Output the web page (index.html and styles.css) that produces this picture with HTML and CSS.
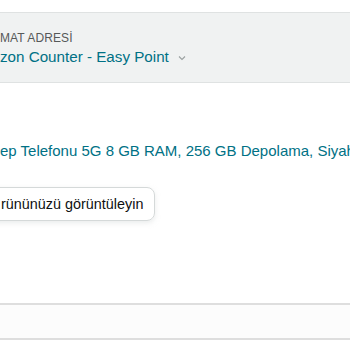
FILE: index.html
```html
<!DOCTYPE html>
<html lang="tr">
<head>
<meta charset="utf-8">
<link rel="stylesheet" href="styles.css">
</head>
<body>
<div class="page">
  <section class="delivery">
    <div class="label">MAT ADRESİ</div>
    <div class="addr"><span class="addr-link">zon Counter - Easy Point</span>
      <svg class="chev" width="8" height="6" viewBox="0 0 8 6"><path d="M1 1.5 L4 4.5 L7 1.5" fill="none" stroke="#9aa0a0" stroke-width="1.1"/></svg>
    </div>
  </section>
  <section class="product">
    <div class="title">ep Telefonu 5G 8 GB RAM, 256 GB Depolama, Siyah</div>
    <div class="btn">rününüzü görüntüleyin</div>
  </section>
  <section class="footer-band"></section>
</div>
</body>
</html>
```
FILE: styles.css
```css
* { box-sizing: border-box; }
html, body { margin: 0; padding: 0; background: #fff; }
body { font-family: "Liberation Sans", Arial, sans-serif; color: #0f1111; width: 350px; height: 350px; overflow: hidden; }
.page { display: flex; flex-direction: column; }
.delivery {
  margin-top: 12px;
  height: 71px;
  background: #f0f2f2;
  border-top: 1px solid #dfe2e2;
  border-bottom: 1px solid #dfe2e2;
  padding: 18px 0 0 0;
}
.label { font-size: 12px; line-height: 14px; color: #565959; letter-spacing: 0.1px; }
.addr { display: flex; align-items: center; gap: 9px; margin-top: 2px; }
.addr-link { font-size: 15.2px; line-height: 20px; color: #007185; }
.chev { margin-top: 1px; }
.product { padding-top: 58px; display: flex; flex-direction: column; align-items: flex-start; }
.title { font-size: 15px; line-height: 20px; color: #007185; white-space: nowrap; }
.btn {
  margin-top: 26px;
  margin-left: -12px;
  padding: 8px 11px 7px 12px;
  border: 1px solid #d5d9d9;
  border-radius: 8px;
  box-shadow: 0 2px 5px rgba(213,217,217,0.5);
  font-size: 14.4px; line-height: 17px;
  color: #0f1111;
}
.footer-band {
  margin-top: 82px;
  height: 37px;
  background: #fcfcfc;
  border-top: 2px solid #dedede;
  border-bottom: 2px solid #dedede;
}
```
